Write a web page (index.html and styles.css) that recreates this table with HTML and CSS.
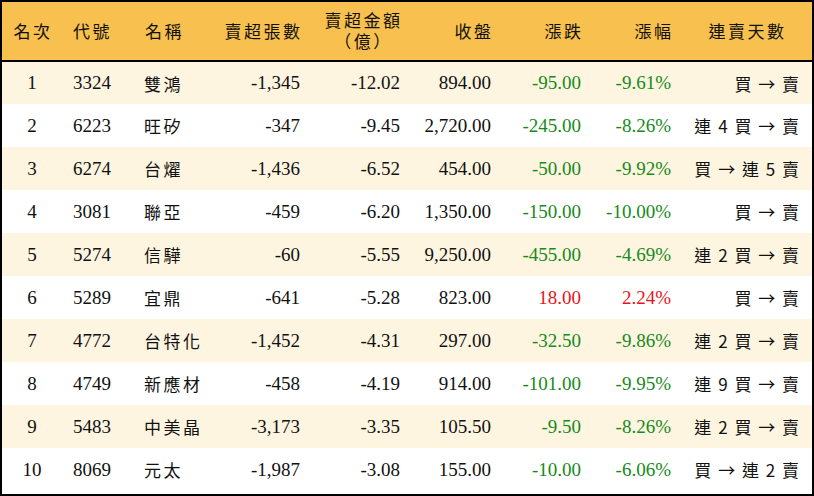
FILE: index.html
```html
<!DOCTYPE html>
<html lang="zh-Hant">
<head>
<meta charset="utf-8">
<link rel="stylesheet" href="styles.css">
</head>
<body>
<div class="frame">
<table class="tbl">
<colgroup>
<col class="w1"><col class="w2"><col class="w3"><col class="w4"><col class="w5"><col class="w6"><col class="w7"><col class="w8"><col class="w9">
</colgroup>
<thead>
<tr>
<th class="c">名次</th>
<th class="l">代號</th>
<th class="l">名稱</th>
<th class="r">賣超張數</th>
<th class="r"><span class="two"><span>賣超金額</span><span>（億）</span></span></th>
<th class="r">收盤</th>
<th class="r">漲跌</th>
<th class="r">漲幅</th>
<th class="c">連賣天數</th>
</tr>
</thead>
<tbody>
<tr class="odd"><td class="c">1</td><td class="l">3324</td><td class="l zh">雙鴻</td><td class="r">-1,345</td><td class="r">-12.02</td><td class="r">894.00</td><td class="r g">-95.00</td><td class="r g">-9.61%</td><td class="r days">買 → 賣</td></tr>
<tr><td class="c">2</td><td class="l">6223</td><td class="l zh">旺矽</td><td class="r">-347</td><td class="r">-9.45</td><td class="r">2,720.00</td><td class="r g">-245.00</td><td class="r g">-8.26%</td><td class="r days">連 4 買 → 賣</td></tr>
<tr class="odd"><td class="c">3</td><td class="l">6274</td><td class="l zh">台燿</td><td class="r">-1,436</td><td class="r">-6.52</td><td class="r">454.00</td><td class="r g">-50.00</td><td class="r g">-9.92%</td><td class="r days">買 → 連 5 賣</td></tr>
<tr><td class="c">4</td><td class="l">3081</td><td class="l zh">聯亞</td><td class="r">-459</td><td class="r">-6.20</td><td class="r">1,350.00</td><td class="r g">-150.00</td><td class="r g">-10.00%</td><td class="r days">買 → 賣</td></tr>
<tr class="odd"><td class="c">5</td><td class="l">5274</td><td class="l zh">信驊</td><td class="r">-60</td><td class="r">-5.55</td><td class="r">9,250.00</td><td class="r g">-455.00</td><td class="r g">-4.69%</td><td class="r days">連 2 買 → 賣</td></tr>
<tr><td class="c">6</td><td class="l">5289</td><td class="l zh">宜鼎</td><td class="r">-641</td><td class="r">-5.28</td><td class="r">823.00</td><td class="r red">18.00</td><td class="r red">2.24%</td><td class="r days">買 → 賣</td></tr>
<tr class="odd"><td class="c">7</td><td class="l">4772</td><td class="l zh">台特化</td><td class="r">-1,452</td><td class="r">-4.31</td><td class="r">297.00</td><td class="r g">-32.50</td><td class="r g">-9.86%</td><td class="r days">連 2 買 → 賣</td></tr>
<tr><td class="c">8</td><td class="l">4749</td><td class="l zh">新應材</td><td class="r">-458</td><td class="r">-4.19</td><td class="r">914.00</td><td class="r g">-101.00</td><td class="r g">-9.95%</td><td class="r days">連 9 買 → 賣</td></tr>
<tr class="odd"><td class="c">9</td><td class="l">5483</td><td class="l zh">中美晶</td><td class="r">-3,173</td><td class="r">-3.35</td><td class="r">105.50</td><td class="r g">-9.50</td><td class="r g">-8.26%</td><td class="r days">連 2 買 → 賣</td></tr>
<tr><td class="c">10</td><td class="l">8069</td><td class="l zh">元太</td><td class="r">-1,987</td><td class="r">-3.08</td><td class="r">155.00</td><td class="r g">-10.00</td><td class="r g">-6.06%</td><td class="r days">買 → 連 2 賣</td></tr>
</tbody>
</table>
</div>
</body>
</html>
```
FILE: styles.css
```css
html, body {
  margin: 0;
  padding: 0;
  background: #ffffff;
}
.frame {
  width: 814px;
  height: 496px;
  box-sizing: border-box;
  border: 2px solid #000;
  background: #fff;
  overflow: hidden;
}
.tbl {
  width: 810px;
  border-collapse: collapse;
  table-layout: fixed;
  font-family: "Liberation Serif", "Noto Sans CJK TC", serif;
  font-size: 19px;
  color: #111;
}
.w1 { width: 60px; }
.w2 { width: 72px; }
.w3 { width: 76px; }
.w4 { width: 100px; }
.w5 { width: 100px; }
.w6 { width: 91px; }
.w7 { width: 90px; }
.w8 { width: 90px; }
.w9 { width: 131px; }
thead tr {
  background: #f8c04e;
  height: 59px;
}
thead th {
  font-family: "Noto Sans CJK TC", sans-serif;
  font-weight: normal;
  font-size: 17px;
  letter-spacing: 2.5px;
  line-height: 22px;
  padding: 0;
  border-bottom: 2px solid #000;
}
tbody tr {
  height: 43px;
}
tbody tr.odd {
  background: #fef5e1;
}
td {
  padding: 0;
  white-space: nowrap;
}
.c { text-align: center; }
.l { text-align: left; padding-left: 11px; }
td.l.zh { padding-left: 10px; }
th.l { padding-left: 11px; }
.r { text-align: right; padding-right: 10px; }
th.r { padding-right: 7.5px; }
th.c { padding-left: 2px; }
.two {
  display: inline-flex;
  flex-direction: column;
  align-items: center;
  font-family: "Liberation Serif", "Noto Sans CJK TC", serif;
  line-height: 21px;
  margin-top: 1px;
}
.zh {
  font-family: "Noto Sans CJK TC", sans-serif;
  font-size: 17px;
  letter-spacing: 2.5px;
}
.days {
  font-family: "Noto Sans CJK TC", sans-serif;
  font-size: 17px;
  letter-spacing: 1.5px;
}
td.r.days { padding-right: 11.5px; }
.g { color: #168a1a; }
.red { color: #e8141c; }
```
